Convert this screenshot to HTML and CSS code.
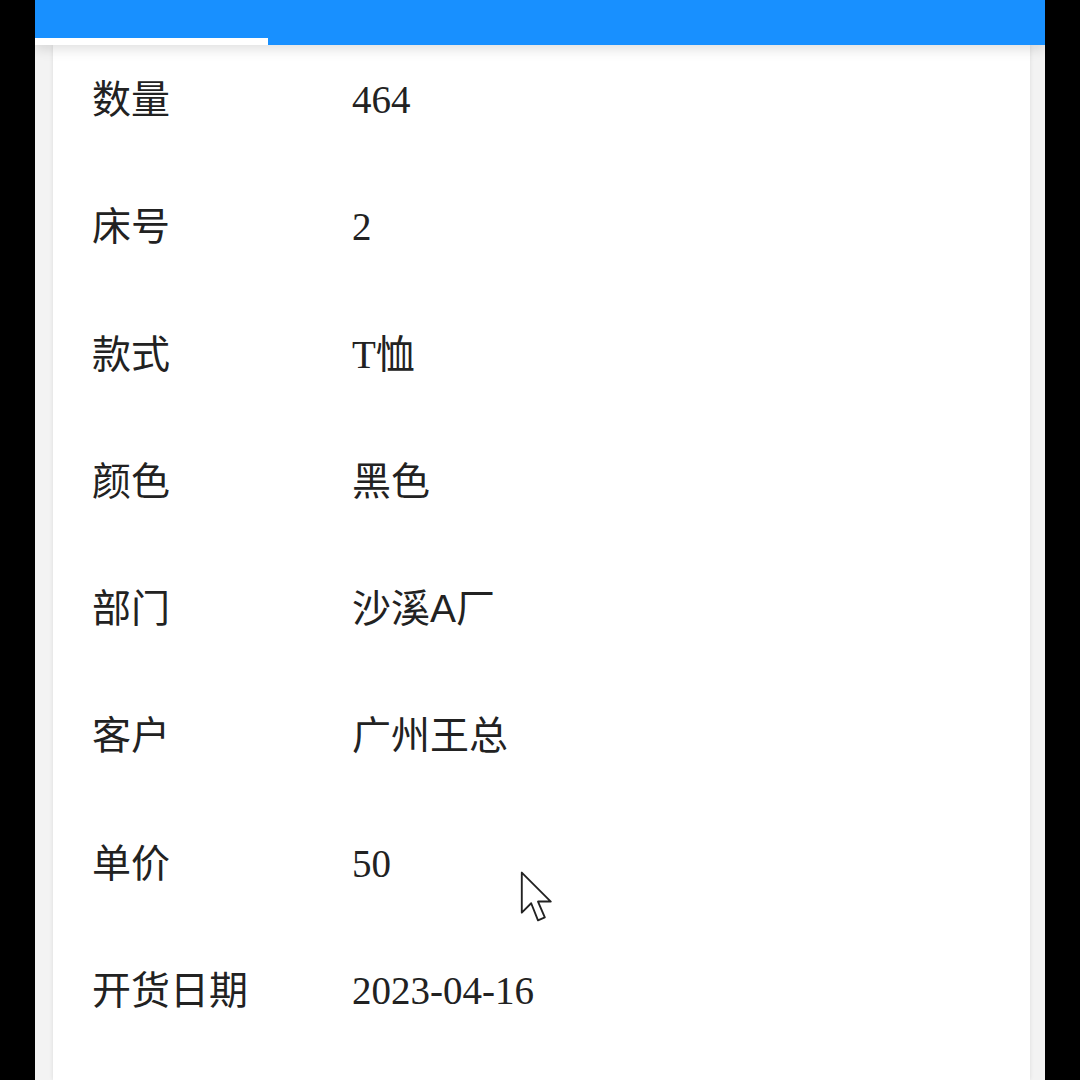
FILE: index.html
```html
<!DOCTYPE html>
<html lang="zh-CN">
<head>
<meta charset="utf-8">
<link rel="stylesheet" href="styles.css">
</head>
<body>
<div class="app">
  <div class="header">
    <div class="tab"></div>
  </div>
  <div class="card">
    <div class="row"><span class="label">数量</span><span class="value">464</span></div>
    <div class="row"><span class="label">床号</span><span class="value">2</span></div>
    <div class="row"><span class="label">款式</span><span class="value">T恤</span></div>
    <div class="row"><span class="label">颜色</span><span class="value">黑色</span></div>
    <div class="row"><span class="label">部门</span><span class="value">沙溪<span class="sans">A</span>厂</span></div>
    <div class="row"><span class="label">客户</span><span class="value">广州王总</span></div>
    <div class="row"><span class="label">单价</span><span class="value">50</span></div>
    <div class="row"><span class="label">开货日期</span><span class="value">2023-04-16</span></div>
  </div>
  <svg class="cursor" width="38" height="58" viewBox="0 0 22 34">
    <path d="M1.5 1.5 L1.5 25 L7 19.5 L11 29.5 L15 27.8 L11 18.5 L18.5 18.5 Z" fill="#fff" stroke="#222" stroke-width="1.1" stroke-linejoin="round"/>
  </svg>
</div>
</body>
</html>
```
FILE: styles.css
```css
html, body {
  margin: 0;
  padding: 0;
  background: #000;
}
.app {
  position: relative;
  width: 1010px;
  height: 1080px;
  margin-left: 35px;
  background: #f3f3f3;
  overflow: hidden;
  display: flex;
  flex-direction: column;
}
.header {
  height: 45px;
  flex: none;
  background: #1890ff;
  display: flex;
  align-items: flex-end;
  position: relative;
  z-index: 2;
  box-shadow: 0 4px 12px rgba(0, 0, 0, 0.13);
}
.tab {
  width: 233px;
  height: 7px;
  background: #fff;
}
.card {
  flex: 1;
  margin: 0 15px 0 18px;
  background: #fff;
  box-shadow: 0 0 4px rgba(0, 0, 0, 0.1);
  padding: 28px 0 0 39px;
  display: flex;
  flex-direction: column;
  gap: 73.3px;
  font-family: "Liberation Serif", "Noto Sans CJK SC", serif;
  font-size: 39px;
  line-height: 54px;
  color: #222;
}
.row {
  display: grid;
  grid-template-columns: 260px 1fr;
}
.sans {
  font-family: "Liberation Sans", sans-serif;
}
.cursor {
  position: absolute;
  left: 484px;
  top: 870px;
  z-index: 3;
}
```
